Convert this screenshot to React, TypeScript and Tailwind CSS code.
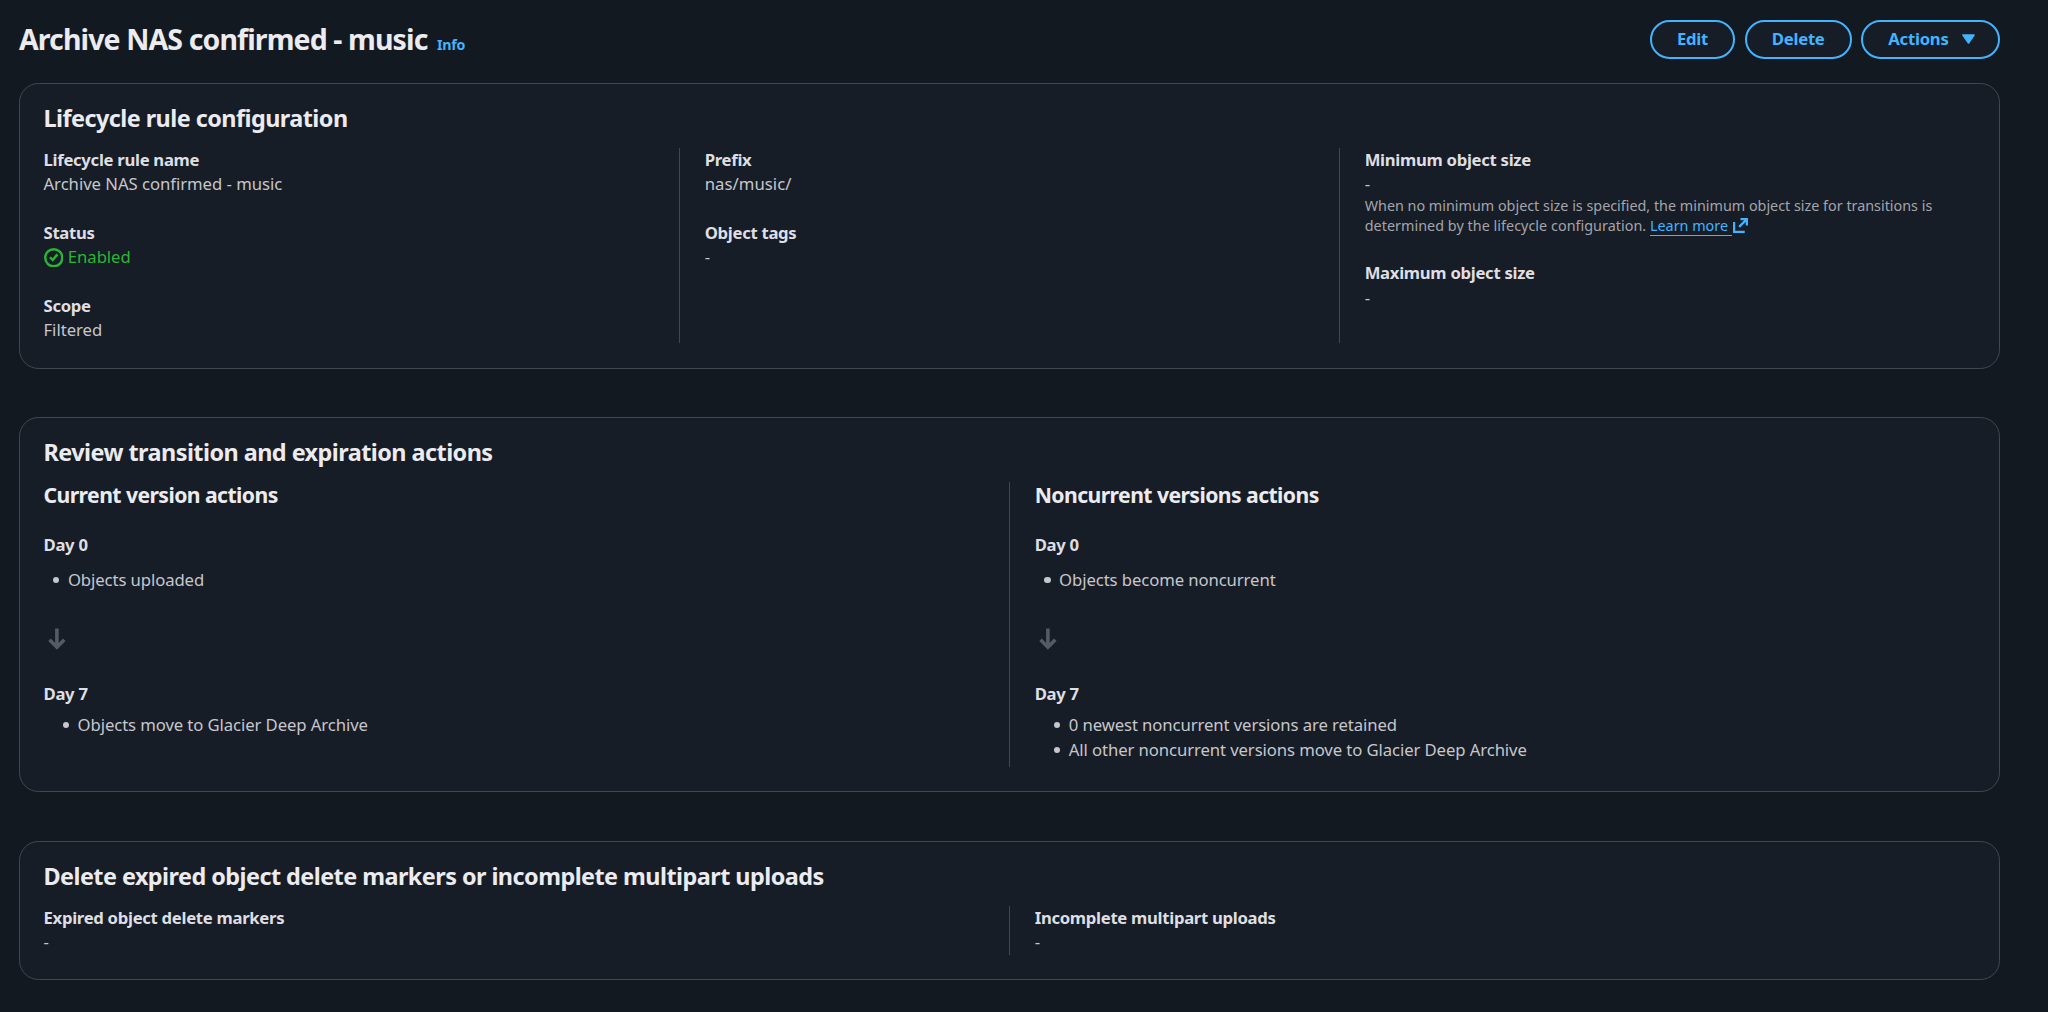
import type { ReactNode } from 'react'

function StatusIcon() {
  return (
    <svg viewBox="0 0 16 16" className="mt-[0.5px] size-[19.5px] shrink-0" fill="none" stroke="currentColor" strokeWidth="2">
      <circle cx="8" cy="8" r="7" />
      <path d="m4.9 7.6 2.2 2.2 3.9-4.6" />
    </svg>
  )
}

function ExternalIcon() {
  return (
    <svg viewBox="0 0 16 16" className="inline-block size-[17px] align-[-3px]" fill="none" stroke="currentColor" strokeWidth="2.1">
      <path d="M8 2h6v6M14 2 6.7 9.3" />
      <path d="M2 4.6V14h10" />
    </svg>
  )
}

function DownArrow() {
  return (
    <svg viewBox="0 0 18 22" className="ml-[4px] block h-[22px] w-[18px] text-[#545b64]" fill="none" stroke="currentColor" strokeWidth="3.6">
      <path d="M8.9 0.5v18.5M1.5 11.8l7.4 7.4 7.4-7.4" />
    </svg>
  )
}

function Button({ children }: { children: ReactNode }) {
  return (
    <button className="flex h-[39px] items-center rounded-full border-[2.4px] border-[#42b4ff] bg-[#161d26] px-[25px] text-[16.7px] leading-[24.4px] font-bold tracking-[-0.27px] text-[#42b4ff]">
      {children}
    </button>
  )
}

function Card({ title, className, children }: { title: string; className: string; children: ReactNode }) {
  return (
    <section className={`flex flex-col rounded-[19.5px] border border-[#424650] bg-[#161d26] pt-[19.5px] ${className}`}>
      <h2 className="px-[23.5px] text-[23.4px] leading-[29.3px] font-bold tracking-[-0.54px] text-[#ebebf0]">{title}</h2>
      {children}
    </section>
  )
}

function Column({ first = false, className = '', children }: { first?: boolean; className?: string; children: ReactNode }) {
  return (
    <div className={`${first ? 'pl-[24.5px]' : 'border-l border-[#424650] pl-[24.7px]'} ${className}`}>{children}</div>
  )
}

function Label({ children }: { children: ReactNode }) {
  return <div className="font-bold tracking-[-0.3px] text-[#dedee3]">{children}</div>
}

function Field({ label, children }: { label: string; children: ReactNode }) {
  return (
    <div>
      <Label>{label}</Label>
      <div>{children}</div>
    </div>
  )
}

function Bullet({ children }: { children: ReactNode }) {
  return (
    <li className="flex items-center tracking-[-0.09px]">
      <span className="mr-[8.4px] ml-[9.6px] size-[6.4px] rounded-full bg-[#c6c6cd]" />
      {children}
    </li>
  )
}

function Timeline({ title, start, end }: { title: string; start: string; end: string[] }) {
  return (
    <>
      <h3 className="text-[21.2px] leading-[26.8px] font-bold tracking-[-0.58px] text-[#ebebf0]">{title}</h3>
      <div className="mt-[24.4px]"><Label>Day 0</Label></div>
      <ul className="mt-[10.3px]"><Bullet>{start}</Bullet></ul>
      <div className="mt-[36.4px] mb-[32px]"><DownArrow /></div>
      <Label>Day 7</Label>
      <ul className="mt-[6px] flex flex-col gap-[0.8px] pl-[9.7px]">
        {end.map((text) => <Bullet key={text}>{text}</Bullet>)}
      </ul>
    </>
  )
}

export default function App() {
  return (
    <main className="flex h-[1012px] w-full flex-col overflow-hidden bg-[#131920] pr-[48px] pl-[19px] font-['Noto_Sans',sans-serif] text-[16.7px] leading-[24.4px] tracking-[-0.04px] text-[#c6c6cd]">
      <header className="flex h-[83px] shrink-0 items-start justify-between pt-[19.5px]">
        <div className="flex items-baseline gap-[9.5px]">
          <h1 className="text-[28.5px] leading-[39px] font-bold tracking-[-0.89px] text-[#ebebf0]">Archive NAS confirmed - music</h1>
          <a className="text-[14.2px] font-bold tracking-[-0.25px] text-[#42b4ff]">Info</a>
        </div>
        <div className="flex gap-[9.8px]">
          <Button>Edit</Button>
          <Button>Delete</Button>
          <Button>
            Actions
            <svg viewBox="0 0 13 10" className="-mr-[2px] ml-[13.5px] h-[10px] w-[13px]" fill="currentColor" stroke="currentColor" strokeWidth="1.6" strokeLinejoin="round">
              <path d="M1 1h11L6.5 9z" />
            </svg>
          </Button>
        </div>
      </header>

      <Card title="Lifecycle rule configuration" className="h-[286px]">
        <div className="mt-[14.8px] -ml-px grid h-[195.4px] grid-cols-3">
          <Column first className="flex flex-col gap-[24.4px]">
            <Field label="Lifecycle rule name">Archive NAS confirmed - music</Field>
            <Field label="Status">
              <span className="flex items-center gap-[4.8px] text-[#2bb534]"><StatusIcon />Enabled</span>
            </Field>
            <Field label="Scope">Filtered</Field>
          </Column>
          <Column className="flex flex-col gap-[24.4px]">
            <Field label="Prefix"><span className="tracking-[0.05px]">nas/music/</span></Field>
            <Field label="Object tags">-</Field>
          </Column>
          <Column className="flex flex-col gap-[26px]">
            <Field label="Minimum object size">
              -
              <p className="text-[14.35px] leading-[19.5px] tracking-normal text-[#a4a4ad]">
                When no minimum object size is specified, the minimum object size for transitions is<br />
                <span className="tracking-[0.04px]">determined by the lifecycle configuration.</span>{' '}
                <a className="text-[#42b4ff]"><span className="border-b border-[#42b4ff] pr-[4px]">Learn more</span><ExternalIcon /></a>
              </p>
            </Field>
            <Field label="Maximum object size">-</Field>
          </Column>
        </div>
      </Card>

      <Card title="Review transition and expiration actions" className="mt-[48.4px] h-[375px]">
        <div className="mt-[14.6px] -ml-px grid h-[285px] grid-cols-2">
          <Column first>
            <Timeline title="Current version actions" start="Objects uploaded" end={['Objects move to Glacier Deep Archive']} />
          </Column>
          <Column>
            <Timeline
              title="Noncurrent versions actions"
              start="Objects become noncurrent"
              end={['0 newest noncurrent versions are retained', 'All other noncurrent versions move to Glacier Deep Archive']}
            />
          </Column>
        </div>
      </Card>

      <Card title="Delete expired object delete markers or incomplete multipart uploads" className="mt-[49px] h-[138.5px]">
        <div className="mt-[14.6px] -ml-px grid h-[48.8px] grid-cols-2">
          <Column first><Field label="Expired object delete markers">-</Field></Column>
          <Column><Field label="Incomplete multipart uploads">-</Field></Column>
        </div>
      </Card>
    </main>
  )
}
